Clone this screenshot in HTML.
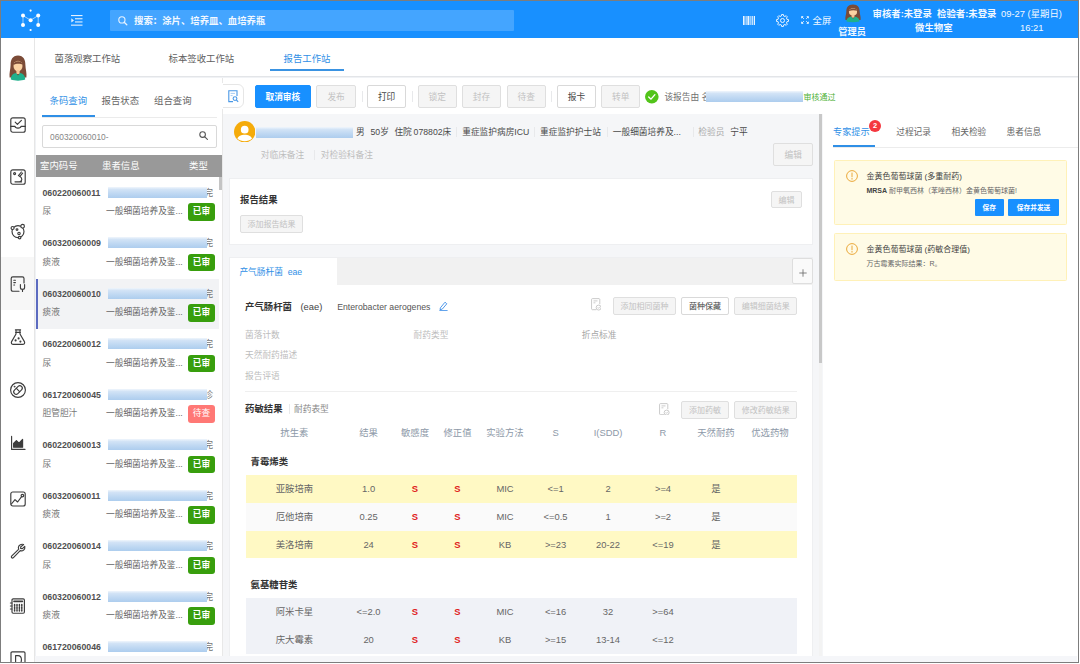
<!DOCTYPE html>
<html lang="zh-CN">
<head>
<meta charset="utf-8">
<title>报告工作站</title>
<style>
*{box-sizing:border-box;margin:0;padding:0}
html,body{width:1080px;height:664px;overflow:hidden;background:#fff}
body{font-family:"Liberation Sans","Noto Sans CJK SC",sans-serif;font-size:9.4px;color:#555;position:relative}
.fr{position:absolute;background:#7d7d7d;z-index:100}
#app{position:absolute;left:0;top:0;width:1079px;height:663px;overflow:hidden;background:#f0f2f5}
#app div,#app span,#app svg{position:absolute}
.t{white-space:nowrap;height:14px;line-height:14px}
.c{transform:translateX(-50%)}
.b{font-weight:bold}
/* header */
#hdr{left:0;top:0;width:1079px;height:38.3px;background:#1890ff;color:#fff}
#srch{left:110px;top:9.5px;width:404px;height:21.5px;background:#44a5ff;border-radius:1px}
/* sidebar */
#side{left:0;top:38px;width:34.5px;height:626px;background:#fff;border-right:1px solid #e6e6e6}
#side svg{left:10px;width:16px;height:16px;overflow:visible;fill:none;stroke:#3c3c3c;stroke-width:1.15;stroke-linecap:round;stroke-linejoin:round}
/* top tabs */
#tabs{left:34.5px;top:38px;width:1045px;height:38.5px;background:#fff;border-bottom:1px solid #e3e5e8}

/* left panel */
#left{left:36px;top:77.5px;width:186.5px;height:586.5px;background:#fff;overflow:hidden;border-right:1px solid #e8e8e8}
#left>*{margin-top:0.5px}
#lhead{left:0;top:77px;width:186.5px;height:22px;background:#999;color:#fff}
.row{left:0;width:183px;height:50.5px}
.row.sel{background:#f2f3f5;border-left:2px solid #5c6bc0}
.row.sel>*{margin-left:-2px}
.code{left:6.5px;top:8px;color:#505050;font-size:8.75px}
.ch{left:167.8px;top:8px;color:#777}
.blur{left:72px;top:9.3px;width:99px;height:11px;background:linear-gradient(180deg,#f0f6fc 0%,#d2e3f6 22%,#bfd8f2 60%,#adcdee 100%)}
.sp{left:6.5px;top:26.5px;color:#777;font-size:8.7px}
.it{left:70px;top:26.5px;color:#666;font-size:8.7px}
.bd{left:152px;top:25.5px;width:27px;height:17.5px;line-height:17.5px;border-radius:3px;background:#389e0d;color:#fff;font-weight:bold;text-align:center;font-size:8.7px}
.bd.wait{background:#ff7875;font-weight:normal}

/* middle */
#mid,#right{left:0;top:0;width:1079px;height:663px}
.s13{font-size:8.7px}
.dk{color:#4a4a4a}
.lt{color:#bdbdbd}
.vs{width:1px;background:#e8e9eb}
.btn{top:84.7px;height:23.3px;line-height:22.9px;border:1px solid #d9d9d9;border-radius:2px;background:#fff;color:#444;font-size:8.7px;text-align:center;white-space:nowrap}
.btn.pri{background:#1890ff;border-color:#1890ff;color:#fff;font-weight:bold}
.btn.dis,.sbtn.dis{background:#f5f5f5;color:#c2c2c2;border-color:#dfdfdf}
.sbtn{height:17.5px;line-height:17.1px;border:1px solid #d9d9d9;border-radius:2px;background:#fff;color:#444;font-size:8px;text-align:center;white-space:nowrap}
.card{background:#fff;border:1px solid #eeeff1}
.blur2{background:linear-gradient(180deg,#f0f6fc 0%,#d2e3f6 22%,#bfd8f2 60%,#adcdee 100%)}
.docic{width:10.5px;height:12.5px;fill:none;stroke:#c2c2c2;stroke-width:0.9}
.th{color:#8d99a8}
.tr{left:245.5px;width:551.7px;height:27.8px}
.tr.y{background:#fff9c4}
.tr.g{background:#fafafa}
.tr.bl{background:#f0f2f7}
.td{top:7px;color:#666}
.sv{color:#e02020;font-weight:bold}
/* right */
.alert{left:833.6px;width:233.5px;background:#fffbe6;border:1px solid #fff1b8;border-radius:1.5px}
.abtn{top:198.8px;height:17px;line-height:17px;background:#1890ff;color:#fff;font-weight:bold;font-size:6.7px;text-align:center;border-radius:1px}
</style>
</head>
<body>
<div id="app">
 <div id="hdr">
  <svg style="left:20px;top:7px;width:22px;height:26px" viewBox="20 7 22 26">
   <g stroke="#d6ebff" stroke-width="0.7" fill="none"><path d="M23 25V15.6L30.6 20.2L38.2 15.6V25"/></g>
   <g fill="#fff"><circle cx="30.6" cy="10.6" r="1.1"/><circle cx="30.6" cy="30" r="1.1"/><circle cx="23" cy="15.6" r="2"/><circle cx="38.2" cy="15.6" r="2"/><circle cx="30.6" cy="20.2" r="2"/><circle cx="23" cy="25" r="2"/><circle cx="38.2" cy="25" r="2"/></g>
  </svg>
  <svg style="left:71px;top:14px;width:12px;height:13px" viewBox="0 0 12 13" fill="#e4f1ff">
   <rect x="0" y="1" width="11.5" height="1.1"/><rect x="4" y="4.2" width="7.5" height="1.1"/><rect x="4" y="7.4" width="7.5" height="1.1"/><rect x="0" y="10.6" width="11.5" height="1.1"/><path d="M0.3 4.3L3 6.4L0.3 8.5Z"/>
  </svg>
  <div id="srch"></div>
  <svg style="left:117.6px;top:16px;width:10px;height:10px" viewBox="0 0 10 10" fill="none" stroke="#e8f3ff" stroke-width="1.1"><circle cx="3.9" cy="3.9" r="3.1"/><path d="M6.2 6.2L8.8 8.8" stroke-width="1.3" stroke-linecap="round"/></svg>
  <div class="t b" style="left:134px;top:13.5px;color:#f2f8ff">搜索：涂片、培养皿、血培养瓶</div>
  <!-- right icons -->
  <svg style="left:743px;top:15.6px;width:12px;height:9.6px" preserveAspectRatio="none" viewBox="0 0 12 9" fill="#e9f4ff"><rect x="0" y="0" width="1.6" height="9"/><rect x="2.6" y="0" width="1" height="9"/><rect x="4.4" y="0" width="2" height="9"/><rect x="7.4" y="0" width="1" height="9"/><rect x="9.2" y="0" width="0.9" height="9"/><rect x="10.8" y="0" width="1.2" height="9"/></svg>
  <svg style="left:776px;top:13.8px;width:13px;height:13px" viewBox="0 0 13 13" fill="none" stroke="#e9f4ff" stroke-width="1" stroke-linejoin="round"><path d="M11.09 5.47L12.54 5.64L12.54 7.36L11.09 7.53L10.47 9.02L11.38 10.16L10.16 11.38L9.02 10.47L7.53 11.09L7.36 12.54L5.64 12.54L5.47 11.09L3.98 10.47L2.84 11.38L1.62 10.16L2.53 9.02L1.91 7.53L0.46 7.36L0.46 5.64L1.91 5.47L2.53 3.98L1.62 2.84L2.84 1.62L3.98 2.53L5.47 1.91L5.64 0.46L7.36 0.46L7.53 1.91L9.02 2.53L10.16 1.62L11.38 2.84L10.47 3.98Z"/><circle cx="6.5" cy="6.5" r="2"/></svg>
  <svg style="left:801.3px;top:16.4px;width:8px;height:8px" viewBox="0 0 7 7" fill="none" stroke="#e9f4ff" stroke-width="0.8"><path d="M0.5 2V0.5H2M5 0.5H6.5V2M6.5 5V6.5H5M2 6.5H0.5V5M0.7 0.7L2.5 2.5M6.3 0.7L4.5 2.5M6.3 6.3L4.5 4.5M0.7 6.3L2.5 4.5"/></svg>
  <div class="t" style="left:812.6px;top:13.6px;color:#f2f8ff">全屏</div>
  <svg style="left:844px;top:4.4px;width:18px;height:18.6px" viewBox="0 0 20 26" preserveAspectRatio="none"><path d="M10 0.6C4.5 0.6 2.6 5 2.6 10C2.6 14 1 18 1.6 22.5L18.4 22.5C19 18 17.4 14 17.4 10C17.4 5 15.5 0.6 10 0.6Z" fill="#7b4b37"/><ellipse cx="10" cy="11" rx="4.5" ry="5.2" fill="#fbd3a4"/><rect x="8.4" y="15" width="3.2" height="4" fill="#f5c594"/><path d="M5.4 10C6 5.4 13.6 5 14.6 9.6C12.4 8.6 8 8.4 5.4 10Z" fill="#7b4b37"/><path d="M2.8 24.6C2.8 20 5.5 18.2 8 18L10 20.6L12 18C14.5 18.2 17.2 20 17.2 24.6C13 26 7 26 2.8 24.6Z" fill="#1fb08c"/></svg>
  <div class="t b" style="left:838.3px;top:24.6px;color:#f2f8ff;font-size:9.2px">管理员</div>
  <div class="t b" style="left:872.5px;top:6.6px;color:#f2f8ff">审核者:未登录&nbsp; 检验者:未登录</div>
  <div class="t b" style="left:915px;top:21px;color:#f2f8ff">微生物室</div>
  <div class="t" style="left:1001px;top:6.6px;color:#f2f8ff">09-27 (星期日)</div>
  <div class="t" style="left:1020px;top:21px;color:#f2f8ff">16:21</div>
 </div>
 <div id="side">
  <div style="left:0;top:219px;width:33.5px;height:53px;background:#f7f7f7"></div>
  <!-- avatar -->
  <svg style="left:8px;top:17px;width:20px;height:26px;stroke:none" viewBox="0 0 20 26"><path d="M10 0.6C4.5 0.6 2.6 5 2.6 10C2.6 14 1 18 1.6 22.5L18.4 22.5C19 18 17.4 14 17.4 10C17.4 5 15.5 0.6 10 0.6Z" fill="#7b4b37"/><ellipse cx="10" cy="11" rx="4.5" ry="5.2" fill="#fbd3a4"/><rect x="8.4" y="15" width="3.2" height="4" fill="#f5c594"/><path d="M5.4 10C6 5.4 13.6 5 14.6 9.6C12.4 8.6 8 8.4 5.4 10Z" fill="#7b4b37"/><path d="M2.8 24.6C2.8 20 5.5 18.2 8 18L10 20.6L12 18C14.5 18.2 17.2 20 17.2 24.6C13 26 7 26 2.8 24.6Z" fill="#1fb08c"/></svg>
  <!-- 2 inbox check -->
  <svg style="top:78.5px" viewBox="0 0 16 16"><rect x="0.8" y="0.8" width="14.4" height="14.4" rx="2"/><path d="M0.8 9.4H5C5.4 11.6 10.6 11.6 11 9.4H15.2"/><path d="M5.2 5.2L7.4 7.4L11.4 3.4"/></svg>
  <!-- 3 microscope square -->
  <svg style="top:131px" viewBox="0 0 16 16"><rect x="0.8" y="0.8" width="14.4" height="14.4" rx="2"/><circle cx="4.6" cy="4.6" r="1"/><path d="M11.4 3L8.4 6.6M12.6 4.2L9.8 7.6M9.4 7.2C12.6 8.4 12.6 12 9.6 12.8M5 12.8H11.6"/></svg>
  <!-- 4 dish -->
  <svg style="top:184.5px" viewBox="0 0 16 16"><circle cx="8" cy="8.6" r="6"/><circle cx="12.6" cy="3.2" r="1.8" fill="#fff"/><circle cx="2.6" cy="5" r="1.5" fill="#fff"/><circle cx="9.6" cy="14.6" r="1.3" fill="#fff"/><circle cx="7" cy="6.6" r="0.9"/><circle cx="9" cy="10.4" r="1.2"/></svg>
  <!-- 5 doc stethoscope -->
  <svg style="top:237.5px" viewBox="0 0 16 16"><path d="M9 15.2H2.8C1.8 15.2 1.2 14.6 1.2 13.6V2.4C1.2 1.4 1.8 0.8 2.8 0.8H12.4C13.4 0.8 14 1.4 14 2.4V7"/><path d="M3.8 4.2H5.4M3.8 6.6H5.4M3.8 9H4.6"/><path d="M10.4 8.6V11.4C10.4 14 14.6 14 14.6 11.4V8.6M12.5 13.4V15.4"/></svg>
  <!-- 6 flask -->
  <svg style="top:291px" viewBox="0 0 16 16"><path d="M5.4 0.8H10.6M6 0.8V5L1.6 12.6C0.8 14.2 1.8 15.4 3.4 15.4H12.6C14.2 15.4 15.2 14.2 14.4 12.6L10 5V0.8M5.6 3.4H10.4"/><circle cx="5.6" cy="11.4" r="0.5"/><circle cx="8.6" cy="9.4" r="0.5"/><circle cx="10.4" cy="12.6" r="0.5"/></svg>
  <!-- 7 pill -->
  <svg style="top:344px" viewBox="0 0 16 16"><circle cx="8" cy="8" r="7.4"/><rect x="3" y="5.6" width="10" height="4.8" rx="2.4" transform="rotate(-45 8 8)"/><path d="M6.4 6.4L9.6 9.6"/><circle cx="4.6" cy="4.6" r="0.4"/></svg>
  <!-- 8 area chart -->
  <svg style="top:397px" viewBox="0 0 16 16"><path d="M1.6 1.4V14.4H15"/><path d="M3.6 12.2V8.4L6.4 5.6L9 8.2L12.6 4.4V12.2Z" fill="#3c3c3c"/></svg>
  <!-- 9 image line -->
  <svg style="top:452.5px" viewBox="0 0 16 16"><rect x="0.8" y="1" width="14.4" height="14" rx="2"/><path d="M1.4 13L5 8.6L7.6 11L11.6 5.6"/><circle cx="12.4" cy="4.6" r="1.3"/></svg>
  <!-- 10 wrench -->
  <svg style="top:505px" viewBox="0 0 16 16"><path d="M13.6 1.6C11.6 0.6 8.6 1.8 8.4 4.4C8.4 5.2 8.6 5.8 8.8 6.2L1.6 13.2C0.8 14.2 2 15.6 3.2 14.8L10.2 7.6C12.6 8.6 15.4 6.6 14.8 3.4L12.4 5.6L10.6 5.4L10.8 3.8Z"/></svg>
  <!-- 11 calculator -->
  <svg style="top:560px" viewBox="0 0 16 16"><rect x="2" y="0.8" width="12.4" height="14.4" rx="1.2"/><path d="M4 3.4H12.4" stroke-width="1.6"/><path d="M4.6 6.4V13M7 6.4V13M9.4 6.4V13M11.8 6.4V13" stroke-width="1.5" stroke-dasharray="1.6 1"/><path d="M0.4 5H2M0.4 8H2M0.4 11H2"/></svg>
  <!-- 12 D -->
  <svg style="top:613px" viewBox="0 0 16 16"><rect x="1" y="0.8" width="14" height="14.4" rx="1.2"/><path d="M5.6 4.6V13M5.6 4.6H8C12.6 4.6 12.6 13 8 13H5.6"/></svg>
 </div>
 <div id="tabs">
  <div class="t" style="left:20px;top:13.5px;color:#606060">菌落观察工作站</div>
  <div class="t" style="left:134px;top:13.5px;color:#606060">标本签收工作站</div>
  <div class="t" style="left:249px;top:13.5px;color:#2f8fe6">报告工作站</div>
  <div style="left:235.5px;top:31.4px;width:73.6px;height:1.5px;background:#3a93e2"></div>
 </div>
<div id="left">
  <div class="t" style="left:13.5px;top:16px;color:#2f8fe6">条码查询</div>
  <div class="t" style="left:65.5px;top:16px;color:#666">报告状态</div>
  <div class="t" style="left:118px;top:16px;color:#666">组合查询</div>
  <div style="left:6px;top:38.6px;width:174.5px;height:1px;background:#ebebeb"></div>
  <div style="left:6px;top:36.8px;width:52.5px;height:2.2px;background:#2f8fe6"></div>
  <div style="left:6px;top:46.5px;width:174.5px;height:23px;border:1px solid #d9d9d9;border-radius:2px;background:#fff"></div>
  <div class="t" style="left:14px;top:51.5px;color:#868686;font-size:8.35px">060320060010-</div>
  <svg style="left:162.5px;top:53px;width:9px;height:9px" viewBox="0 0 9 9" fill="none" stroke="#555" stroke-width="1.1"><circle cx="3.6" cy="3.6" r="2.8"/><path d="M5.8 5.8L8.4 8.4" stroke-linecap="round"/></svg>
  <div id="lhead"><div class="t" style="left:4px;top:4px">室内码号</div><div class="t" style="left:66px;top:4px">患者信息</div><div class="t" style="left:153px;top:4px">类型</div></div>
  <div style="left:183.3px;top:99px;width:3px;height:12.5px;background:#c4c4c4"></div>
  <div class="row" style="top:99.5px"><div class="t b code">060220060011</div><div class="t ch">完</div><div class="blur"></div><div class="t sp">尿</div><div class="t it">一般细菌培养及鉴...</div><div class="bd">已审</div></div>
  <div class="row" style="top:150.0px"><div class="t b code">060320060009</div><div class="t ch">完</div><div class="blur"></div><div class="t sp">痰液</div><div class="t it">一般细菌培养及鉴...</div><div class="bd">已审</div></div>
  <div class="row sel" style="top:200.5px"><div class="t b code">060320060010</div><div class="t ch">完</div><div class="blur"></div><div class="t sp">痰液</div><div class="t it">一般细菌培养及鉴...</div><div class="bd">已审</div></div>
  <div class="row" style="top:251.0px"><div class="t b code">060220060012</div><div class="t ch">完</div><div class="blur"></div><div class="t sp">尿</div><div class="t it">一般细菌培养及鉴...</div><div class="bd">已审</div></div>
  <div class="row" style="top:301.5px"><div class="t b code">061720060045</div><div class="t ch">诊</div><div class="blur"></div><div class="t sp">胆管胆汁</div><div class="t it">一般细菌培养及鉴...</div><div class="bd wait">待查</div></div>
  <div class="row" style="top:352.0px"><div class="t b code">060220060013</div><div class="t ch">完</div><div class="blur"></div><div class="t sp">尿</div><div class="t it">一般细菌培养及鉴...</div><div class="bd">已审</div></div>
  <div class="row" style="top:402.5px"><div class="t b code">060320060011</div><div class="t ch">完</div><div class="blur"></div><div class="t sp">痰液</div><div class="t it">一般细菌培养及鉴...</div><div class="bd">已审</div></div>
  <div class="row" style="top:453.0px"><div class="t b code">060220060014</div><div class="t ch">完</div><div class="blur"></div><div class="t sp">尿</div><div class="t it">一般细菌培养及鉴...</div><div class="bd">已审</div></div>
  <div class="row" style="top:503.5px"><div class="t b code">060320060012</div><div class="t ch">完</div><div class="blur"></div><div class="t sp">痰液</div><div class="t it">一般细菌培养及鉴...</div><div class="bd">已审</div></div>
  <div class="row" style="top:554.0px"><div class="t b code">061720060046</div><div class="t ch">完</div><div class="blur"></div><div class="t sp">痰液</div><div class="t it">一般细菌培养及鉴...</div><div class="bd">已审</div></div>
 </div>
 <div id="mid">
  <div style="left:222.5px;top:77.5px;width:857px;height:36.5px;background:#fff"></div>
  <div style="left:222.5px;top:114px;width:600px;height:550px;background:#f5f6f8"></div>
  <!-- toolbar -->
  <div style="left:215px;top:84px;width:28.5px;height:23.5px;border:1px solid #e6e6e6;border-radius:6px;background:#fff"></div>
  <div style="left:215px;top:83px;width:7.5px;height:26px;background:#fff"></div>
  <svg style="left:227.5px;top:90px;width:11px;height:12.5px" viewBox="0 0 11 12.5" fill="none" stroke="#4a98e6" stroke-width="1.1"><path d="M5 11.6H0.8V0.8H9V6"/><path d="M2.6 3.4H7M2.6 5.6H4.6" stroke-width="0.9" stroke="#9cc6f2"/><circle cx="7" cy="8.6" r="1.9"/><path d="M8.4 10L10.2 11.8"/></svg>
  <div class="btn pri" style="left:254.7px;width:56.3px">取消审核</div>
  <div class="btn dis" style="left:316.4px;width:39.4px">发布</div>
  <div class="vs" style="left:361.5px;top:91px;height:11px"></div>
  <div class="btn" style="left:367.2px;width:38.8px">打印</div>
  <div class="vs" style="left:411.5px;top:91px;height:11px"></div>
  <div class="btn dis" style="left:417.8px;width:38.9px">锁定</div>
  <div class="btn dis" style="left:462.2px;width:38.5px">封存</div>
  <div class="btn dis" style="left:506.7px;width:38.9px">待查</div>
  <div class="vs" style="left:551px;top:91px;height:11px"></div>
  <div class="btn" style="left:557.2px;width:38.6px">报卡</div>
  <div class="btn dis" style="left:601.4px;width:38.6px">转单</div>
  <svg style="left:645.4px;top:90.2px;width:13.6px;height:13.6px" viewBox="0 0 14 14"><circle cx="7" cy="7" r="7" fill="#52c41a"/><path d="M3.8 7.2L6.2 9.4L10.2 4.8" fill="none" stroke="#fff" stroke-width="1.4" stroke-linecap="round" stroke-linejoin="round"/></svg>
  <div class="t s13" style="left:664.4px;top:90.4px;color:#707070">该报告由 名</div>
  <div class="blur2" style="left:705.6px;top:90.8px;width:97.4px;height:10.8px"></div>
  <div class="t" style="left:803.5px;top:91px;color:#4db135;font-size:8px">审核通过</div>
  <!-- patient -->
  <svg style="left:233.6px;top:120.8px;width:21.4px;height:21.6px" viewBox="0 0 20 20"><circle cx="10" cy="10" r="10" fill="#f5ab0a"/><circle cx="10" cy="8" r="3.6" fill="#fff"/><path d="M3.2 16.6C4.4 11.6 15.6 11.6 16.8 16.6C13.6 19.6 6.4 19.6 3.2 16.6Z" fill="#fff"/></svg>
  <div class="blur2" style="left:255.6px;top:126.8px;width:97.2px;height:11px"></div>
  <div class="t s13 dk" style="left:356px;top:125px">男</div>
  <div class="t s13 dk" style="left:370.5px;top:125px">50岁</div>
  <div class="t s13 dk" style="left:394.4px;top:125px">住院</div>
  <div class="t s13 dk" style="left:413.6px;top:125px">078802床</div>
  <div class="vs" style="left:455.5px;top:127px;height:10px"></div>
  <div class="t s13 dk" style="left:462.2px;top:125px">重症监护病房ICU</div>
  <div class="vs" style="left:534px;top:127px;height:10px"></div>
  <div class="t s13 dk" style="left:540px;top:125px">重症监护护士站</div>
  <div class="vs" style="left:606.5px;top:127px;height:10px"></div>
  <div class="t s13 dk" style="left:612.8px;top:125px">一般细菌培养及...</div>
  <div class="vs" style="left:692.5px;top:127px;height:10px"></div>
  <div class="t s13" style="left:698.3px;top:125px;color:#aaa">检验员</div>
  <div class="t s13 dk" style="left:730.3px;top:125px">宁平</div>
  <div class="t s13 lt" style="left:260.8px;top:147.7px">对临床备注</div>
  <div class="vs" style="left:314.4px;top:150px;height:10px"></div>
  <div class="t s13 lt" style="left:320.8px;top:147.7px">对检验科备注</div>
  <div class="btn dis" style="left:773.3px;top:143px;width:40px;height:22.8px;line-height:22.4px">编辑</div>
  <!-- report result card -->
  <div class="card" style="left:229px;top:178.3px;width:584.3px;height:66.6px"></div>
  <div class="t b" style="left:240px;top:193px;color:#333">报告结果</div>
  <div class="sbtn dis" style="left:240px;top:215px;width:62.8px">添加报告结果</div>
  <div class="sbtn dis" style="left:771px;top:190.8px;width:31px">编辑</div>
  <!-- organism card -->
  <div class="card" style="left:229px;top:257.2px;width:584.3px;height:420px"></div>
  <div style="left:229.5px;top:257.7px;width:583.3px;height:27.3px;background:#f1f1f1"></div>
  <div style="left:229.5px;top:257.7px;width:107.7px;height:27.5px;background:#fff"></div>
  <div class="t s13" style="left:239.4px;top:265px;color:#2f8fe6">产气肠杆菌&nbsp; eae</div>
  <div style="left:792.2px;top:258px;width:20.8px;height:25.8px;background:#fafafa;border:1px solid #dedede;border-radius:2px"></div>
  <svg style="left:798.6px;top:268.5px;width:8px;height:8px" viewBox="0 0 8 8" stroke="#666" stroke-width="0.8"><path d="M4 0.3V7.7M0.3 4H7.7"/></svg>
  <div class="t b" style="left:245px;top:299.7px;color:#333">产气肠杆菌</div>
  <div class="t" style="left:300.5px;top:299.7px;color:#444">(eae)</div>
  <div class="t s13" style="left:337.2px;top:299.7px;color:#555">Enterobacter aerogenes</div>
  <svg style="left:439px;top:301px;width:9px;height:10px" viewBox="0 0 9 10" fill="none" stroke="#3f8fe8" stroke-width="0.9" stroke-linejoin="round"><path d="M1.4 6.8L6 1.2L7.8 2.8L3.2 8.2L1 8.6Z"/><path d="M0.4 9.6H8.6"/></svg>
  <svg class="docic" style="left:590.8px;top:298.3px" viewBox="0 0 11 13"><path d="M5.6 12.2H1.4C1 12.2 0.6 11.8 0.6 11.4V1.4C0.6 1 1 0.6 1.4 0.6H8.4C8.8 0.6 9.2 1 9.2 1.4V6.4"/><path d="M2.6 3H6.8M2.6 5H4.6"/><circle cx="8" cy="10" r="2.6"/><path d="M7 10L7.8 10.8L9.2 9.2"/></svg>
  <div class="sbtn dis" style="left:613px;top:297px;width:62.8px">添加相同菌种</div>
  <div class="sbtn" style="left:681.4px;top:297px;width:47.2px">菌种保藏</div>
  <div class="sbtn dis" style="left:734.2px;top:297px;width:63.3px">编辑细菌结果</div>
  <div class="t s13 lt" style="left:245px;top:328px">菌落计数</div>
  <div class="t s13 lt" style="left:413.6px;top:328px">耐药类型</div>
  <div class="t s13" style="left:581.7px;top:328px;color:#a6a6a6">折点标准</div>
  <div class="t s13 lt" style="left:245px;top:347.7px">天然耐药描述</div>
  <div class="t s13 lt" style="left:245px;top:368.6px">报告评语</div>
  <div style="left:245px;top:391px;width:552px;height:1px;background:#efefef"></div>
  <div class="t b" style="left:245px;top:402px;color:#333">药敏结果</div>
  <div class="vs" style="left:288.6px;top:404px;height:10px"></div>
  <div class="t s13" style="left:294px;top:402px;color:#888">耐药表型</div>
  <svg class="docic" style="left:659px;top:402.5px" viewBox="0 0 11 13"><path d="M5.6 12.2H1.4C1 12.2 0.6 11.8 0.6 11.4V1.4C0.6 1 1 0.6 1.4 0.6H8.4C8.8 0.6 9.2 1 9.2 1.4V6.4"/><path d="M2.6 3H6.8M2.6 5H4.6"/><circle cx="8" cy="10" r="2.6"/><path d="M7 10L7.8 10.8L9.2 9.2"/></svg>
  <div class="sbtn dis" style="left:681.4px;top:401px;width:47.2px">添加药敏</div>
  <div class="sbtn dis" style="left:734.2px;top:401px;width:63.3px">修改药敏结果</div>
  <div class="t c th" style="left:294.4px;top:426.3px">抗生素</div>
  <div class="t c th" style="left:368.6px;top:426.3px">结果</div>
  <div class="t c th" style="left:415px;top:426.3px">敏感度</div>
  <div class="t c th" style="left:457.5px;top:426.3px">修正值</div>
  <div class="t c th" style="left:505px;top:426.3px">实验方法</div>
  <div class="t c th" style="left:555.6px;top:426.3px">S</div>
  <div class="t c th" style="left:608px;top:426.3px">I(SDD)</div>
  <div class="t c th" style="left:663px;top:426.3px">R</div>
  <div class="t c th" style="left:716px;top:426.3px">天然耐药</div>
  <div class="t c th" style="left:770px;top:426.3px">优选药物</div>
  <div class="t b" style="left:250.5px;top:454.7px;color:#333">青霉烯类</div>
  <div class="tr y" style="top:475.0px"><div class="t c td" style="left:48.89999999999998px">亚胺培南</div><div class="t c td" style="left:123.10000000000002px">1.0</div><div class="t c td sv" style="left:169.5px">S</div><div class="t c td sv" style="left:212.0px">S</div><div class="t c td" style="left:259.5px">MIC</div><div class="t c td" style="left:310.1px">&lt;=1</div><div class="t c td" style="left:362.5px">2</div><div class="t c td" style="left:417.5px">&gt;=4</div><div class="t c td" style="left:470.5px">是</div></div>
  <div class="tr g" style="top:502.8px"><div class="t c td" style="left:48.89999999999998px">厄他培南</div><div class="t c td" style="left:123.10000000000002px">0.25</div><div class="t c td sv" style="left:169.5px">S</div><div class="t c td sv" style="left:212.0px">S</div><div class="t c td" style="left:259.5px">MIC</div><div class="t c td" style="left:310.1px">&lt;=0.5</div><div class="t c td" style="left:362.5px">1</div><div class="t c td" style="left:417.5px">&gt;=2</div><div class="t c td" style="left:470.5px">是</div></div>
  <div class="tr y" style="top:530.6px"><div class="t c td" style="left:48.89999999999998px">美洛培南</div><div class="t c td" style="left:123.10000000000002px">24</div><div class="t c td sv" style="left:169.5px">S</div><div class="t c td sv" style="left:212.0px">S</div><div class="t c td" style="left:259.5px">KB</div><div class="t c td" style="left:310.1px">&gt;=23</div><div class="t c td" style="left:362.5px">20-22</div><div class="t c td" style="left:417.5px">&lt;=19</div><div class="t c td" style="left:470.5px">是</div></div>
  <div class="t b" style="left:250.5px;top:577.7px;color:#333">氨基糖苷类</div>
  <div class="tr bl" style="top:598.0px"><div class="t c td" style="left:48.89999999999998px">阿米卡星</div><div class="t c td" style="left:123.10000000000002px">&lt;=2.0</div><div class="t c td sv" style="left:169.5px">S</div><div class="t c td sv" style="left:212.0px">S</div><div class="t c td" style="left:259.5px">MIC</div><div class="t c td" style="left:310.1px">&lt;=16</div><div class="t c td" style="left:362.5px">32</div><div class="t c td" style="left:417.5px">&gt;=64</div></div>
  <div class="tr bl" style="top:625.8px"><div class="t c td" style="left:48.89999999999998px">庆大霉素</div><div class="t c td" style="left:123.10000000000002px">20</div><div class="t c td sv" style="left:169.5px">S</div><div class="t c td sv" style="left:212.0px">S</div><div class="t c td" style="left:259.5px">KB</div><div class="t c td" style="left:310.1px">&gt;=15</div><div class="t c td" style="left:362.5px">13-14</div><div class="t c td" style="left:417.5px">&lt;=12</div></div>
  <div style="left:818.5px;top:114px;width:3.5px;height:550px;background:#f3f3f3"></div>
  <div style="left:819.2px;top:114.3px;width:3.2px;height:248.6px;background:#c8c8c8"></div>
 </div>

 <div id="right">
  <div style="left:822.6px;top:114px;width:256.4px;height:550px;background:#fff"></div>
  <div style="left:833px;top:146.8px;width:246px;height:1px;background:#ececec"></div>
  <div style="left:833px;top:145.2px;width:42px;height:2px;background:#2f8fe6"></div>
  <div class="t" style="left:833px;top:124.8px;color:#2f8fe6;font-size:9.2px">专家提示</div>
  <div style="left:869px;top:120.4px;width:12px;height:12px;border-radius:6px;background:#f5373f;color:#fff;font-size:7.4px;font-weight:bold;line-height:12px;text-align:center">2</div>
  <div class="t" style="left:896.2px;top:124.8px;color:#666;font-size:8.7px">过程记录</div>
  <div class="t" style="left:951.5px;top:124.8px;color:#666;font-size:8.7px">相关检验</div>
  <div class="t" style="left:1006.5px;top:124.8px;color:#666;font-size:8.7px">患者信息</div>
  <div class="alert" style="top:160.3px;height:64.8px"></div>
  <svg style="left:846px;top:170.3px;width:12px;height:12px" viewBox="0 0 12 12" fill="none" stroke="#eaa83a" stroke-width="1"><circle cx="6" cy="6" r="5.4"/><path d="M6 3V6.8M6 8.4V9.2" stroke-linecap="round"/></svg>
  <div class="t" style="left:866.4px;top:169.5px;color:#444;font-size:8px">金黄色葡萄球菌 (多重耐药)</div>
  <div class="t" style="left:866.4px;top:183.6px;color:#666;font-size:7px"><b style="color:#444">MRSA</b> 耐甲氧西林（苯唑西林）金黄色葡萄球菌!</div>
  <div class="abtn" style="left:974.5px;width:29.5px">保存</div>
  <div class="abtn" style="left:1008.4px;width:50.4px">保存并发送</div>
  <div class="alert" style="top:233.3px;height:47.6px"></div>
  <svg style="left:846px;top:243.3px;width:12px;height:12px" viewBox="0 0 12 12" fill="none" stroke="#eaa83a" stroke-width="1"><circle cx="6" cy="6" r="5.4"/><path d="M6 3V6.8M6 8.4V9.2" stroke-linecap="round"/></svg>
  <div class="t" style="left:866.4px;top:242.5px;color:#444;font-size:8px">金黄色葡萄球菌 (药敏合理值)</div>
  <div class="t" style="left:866.4px;top:257.2px;color:#666;font-size:7px">万古霉素实际结果：R。</div>
  <div style="left:35px;top:656px;width:1042px;height:6px;background:#f5f6f9"></div>
 </div>

</div>
<div class="fr" style="left:0;top:0;width:1079.1px;height:1.45px"></div><div class="fr" style="left:0;top:0;width:0.95px;height:662.9px"></div><div class="fr" style="left:1078.1px;top:0;width:1px;height:662.9px"></div><div class="fr" style="left:0;top:661.9px;width:1079.1px;height:1px"></div>
</body>
</html>
